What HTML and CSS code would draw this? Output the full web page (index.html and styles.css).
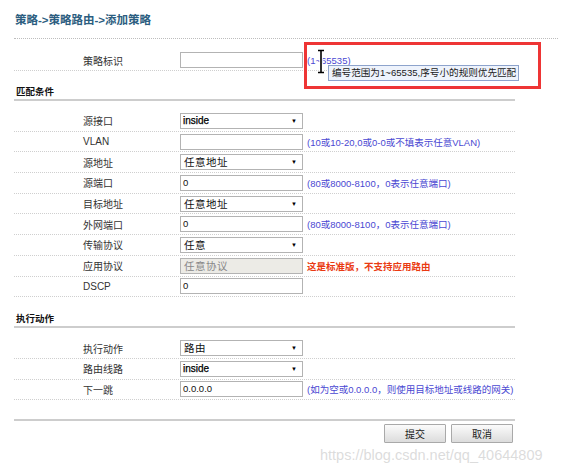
FILE: index.html
```html
<!DOCTYPE html>
<html lang="zh-CN">
<head>
<meta charset="utf-8">
<title>添加策略</title>
<link rel="stylesheet" href="styles.css">
</head>
<body>
<div class="page">
  <div class="title">策略-&gt;策略路由-&gt;添加策略</div>

  <div class="rows top-rows">
    <div class="row">
      <span class="label">策略标识</span>
      <span class="field"></span>
      <span class="hint">(1~65535)</span>
    </div>
  </div>

  <div class="section-head">匹配条件</div>
  <div class="rows">
    <div class="row">
      <span class="label">源接口</span>
      <span class="field select"><span class="val strong">inside</span><span class="arrow">▼</span></span>
    </div>
    <div class="row">
      <span class="label">VLAN</span>
      <span class="field"></span>
      <span class="hint">(10或10-20,0或0-0或不填表示任意VLAN)</span>
    </div>
    <div class="row">
      <span class="label">源地址</span>
      <span class="field select"><span class="val cjk">任意地址</span><span class="arrow">▼</span></span>
    </div>
    <div class="row">
      <span class="label">源端口</span>
      <span class="field"><span class="val">0</span></span>
      <span class="hint">(80或8000-8100，0表示任意端口)</span>
    </div>
    <div class="row">
      <span class="label">目标地址</span>
      <span class="field select"><span class="val cjk">任意地址</span><span class="arrow">▼</span></span>
    </div>
    <div class="row">
      <span class="label">外网端口</span>
      <span class="field"><span class="val">0</span></span>
      <span class="hint">(80或8000-8100，0表示任意端口)</span>
    </div>
    <div class="row">
      <span class="label">传输协议</span>
      <span class="field select"><span class="val cjk">任意</span><span class="arrow">▼</span></span>
    </div>
    <div class="row">
      <span class="label">应用协议</span>
      <span class="field disabled"><span class="val cjk">任意协议</span></span>
      <span class="hint warn">这是标准版，不支持应用路由</span>
    </div>
    <div class="row">
      <span class="label">DSCP</span>
      <span class="field"><span class="val">0</span></span>
    </div>
  </div>

  <div class="section-head second">执行动作</div>
  <div class="rows">
    <div class="row">
      <span class="label">执行动作</span>
      <span class="field select"><span class="val cjk">路由</span><span class="arrow">▼</span></span>
    </div>
    <div class="row">
      <span class="label">路由线路</span>
      <span class="field select"><span class="val strong">inside</span><span class="arrow">▼</span></span>
    </div>
    <div class="row">
      <span class="label">下一跳</span>
      <span class="field"><span class="val">0.0.0.0</span></span>
      <span class="hint">(如为空或0.0.0.0，则使用目标地址或线路的网关)</span>
    </div>
  </div>

  <div class="actions">
    <button class="btn" type="button">提交</button>
    <button class="btn" type="button">取消</button>
  </div>
</div>

<div class="highlight"></div>
<svg class="cursor" width="8" height="25" viewBox="0 0 8 25" aria-hidden="true">
  <path d="M1 1.5 H7 M4 1.5 V23.5 M1 23.5 H7" stroke="#fff" stroke-width="3.5" fill="none"/>
  <path d="M1 1.5 H7 M4 1.5 V23.5 M1 23.5 H7" stroke="#000" stroke-width="1.6" fill="none"/>
</svg>
<div class="tooltip">编号范围为1~65535,序号小的规则优先匹配</div>
<div class="watermark">https://blog.csdn.net/qq_40644809</div>
</body>
</html>
```

FILE: styles.css
```css
html, body {
  margin: 0;
  padding: 0;
  background: #fff;
}

body {
  position: relative;
  width: 572px;
  height: 475px;
  overflow: hidden;
  font-family: "Liberation Sans", "Noto Sans CJK SC", sans-serif;
  font-size: 9.5px;
  color: #333;
}

.page {
  padding-left: 14px;
  width: 501px;
}

.title {
  width: 543px;
  padding: 12px 0 10px 1px;
  line-height: 16px;
  font-size: 11.5px;
  font-weight: bold;
  color: #2c5d80;
  border-bottom: 1px dotted #bdbdbd;
}

.rows {
  margin-top: 10px;
}

.top-rows {
  margin-top: 11px;
}

.row {
  display: flex;
  align-items: center;
  box-sizing: border-box;
  height: 20.7px;
  padding-left: 69px;
  border-bottom: 1px dotted #cfcfcf;
}

.top-rows .row {
  height: 21px;
}

.label {
  width: 97px;
  flex: none;
  font-size: 10px;
  color: #333;
}

.field {
  flex: none;
  box-sizing: border-box;
  width: 123px;
  height: 16px;
  border: 1px solid #b3b3b3;
  background: #fff;
  display: flex;
  align-items: center;
  padding-left: 2px;
  color: #111;
}

.field.select {
  justify-content: space-between;
  padding-left: 2px;
  padding-right: 5px;
}

.field.disabled {
  background: #ecebe6;
  color: #888;
}

.val {
  font-size: 9.5px;
  line-height: 14px;
}

.val.cjk {
  font-size: 10.5px;
  letter-spacing: 0.5px;
  padding-left: 1px;
}

.val.strong {
  color: #000;
  font-size: 10px;
  -webkit-text-stroke: 0.25px #000;
}

.arrow {
  font-size: 6px;
  color: #000;
  line-height: 8px;
}

.hint {
  margin-left: 4px;
  color: #4a48d2;
  white-space: nowrap;
}

.hint.warn {
  color: #ea3a12;
  font-weight: bold;
}

.section-head {
  margin-top: 14px;
  padding-left: 2px;
  line-height: 14px;
  font-weight: bold;
  color: #111;
  border-bottom: 2px solid #cdcdcd;
}

.section-head.second {
  margin-top: 15px;
}

.actions {
  margin-top: 19px;
  border-top: 2px solid #cdcdcd;
  padding-top: 3px;
  padding-right: 2px;
  display: flex;
  justify-content: flex-end;
  gap: 5px;
}

.btn {
  width: 62px;
  height: 19px;
  margin: 0;
  padding: 0;
  border: 1px solid #a9a9a9;
  border-radius: 1px;
  background: linear-gradient(#fbfbfb, #dcdcdc);
  font-family: "Liberation Sans", "Noto Sans CJK SC", sans-serif;
  font-size: 10px;
  color: #222;
}

/* overlays */
.highlight {
  position: absolute;
  left: 304px;
  top: 42px;
  width: 237px;
  height: 47px;
  box-sizing: border-box;
  border: 3px solid #ee3535;
}

.cursor {
  position: absolute;
  left: 317px;
  top: 49px;
}

.tooltip {
  position: absolute;
  left: 328px;
  top: 65px;
  height: 16px;
  box-sizing: border-box;
  white-space: nowrap;
  padding: 0 2px 0 3px;
  border: 1px solid #8da3cc;
  background: #eef3fc;
  font-size: 9.6px;
  line-height: 14px;
  color: #1a1a1a;
}

.watermark {
  position: absolute;
  left: 320px;
  top: 447px;
  font-family: "Liberation Sans", sans-serif;
  font-size: 14.5px;
  color: rgba(190, 190, 190, 0.55);
  white-space: nowrap;
}
```
